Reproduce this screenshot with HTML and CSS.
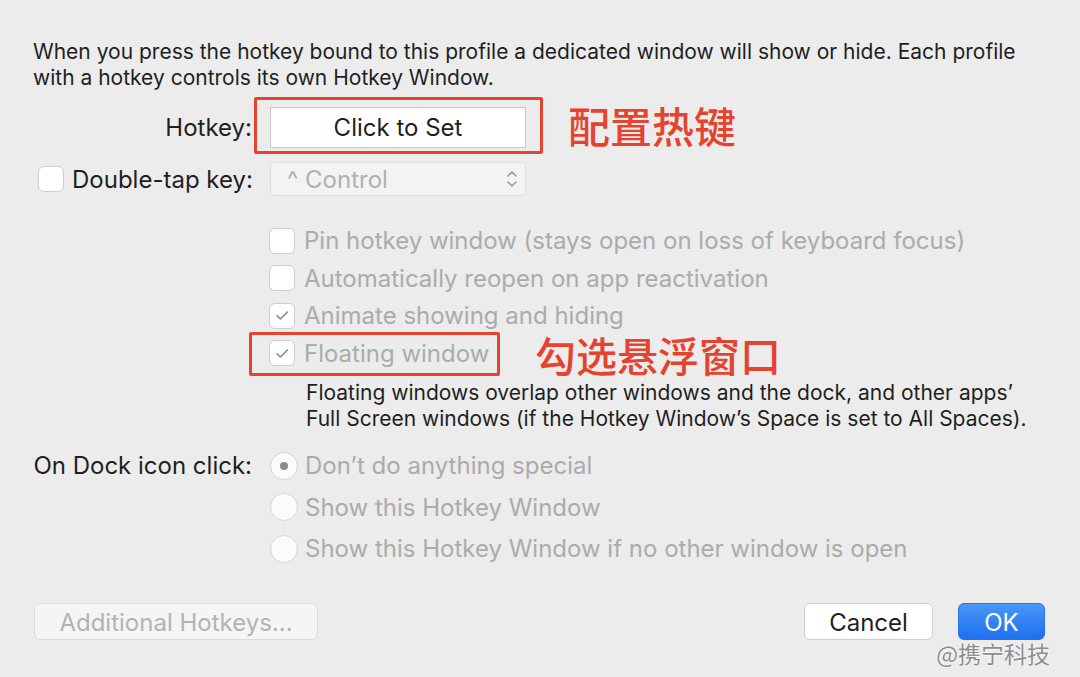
FILE: index.html
```html
<!DOCTYPE html>
<html lang="en">
<head>
    <meta charset="UTF-8">
    <title>Hotkey Window</title>
    <link rel="stylesheet" href="styles.css">
</head>
<body>
    <div class="dialog">
        <!-- Intro text -->
        <p class="intro">When you press the hotkey bound to this profile a dedicated window will show or hide. Each profile with a hotkey controls its own Hotkey Window.</p>

        <!-- Hotkey row -->
        <div class="row hotkey-row">
            <div class="label">Hotkey:</div>
            <div class="control">
                <div class="mark-wrap">
                    <div class="field">Click to Set</div>
                    <span class="mark mark-hotkey"></span>
                    <span class="note note-hotkey">配置热键</span>
                </div>
            </div>
        </div>

        <!-- Double-tap row -->
        <div class="row tap-row">
            <div class="label label-check">
                <span class="box"></span>
                <span>Double-tap key:</span>
            </div>
            <div class="control">
                <div class="select">
                    <span>^ Control</span>
                    <svg class="stepper" width="12" height="22" viewBox="0 0 12 22">
                        <path d="M2 8 L6 4 L10 8" fill="none" stroke="#9a9a9a" stroke-width="1.6" stroke-linecap="round" stroke-linejoin="round"/>
                        <path d="M2 14 L6 18 L10 14" fill="none" stroke="#9a9a9a" stroke-width="1.6" stroke-linecap="round" stroke-linejoin="round"/>
                    </svg>
                </div>
            </div>
        </div>

        <!-- Options -->
        <div class="options">
            <div class="opt"><span class="box"></span>Pin hotkey window (stays open on loss of keyboard focus)</div>
            <div class="opt"><span class="box"></span>Automatically reopen on app reactivation</div>
            <div class="opt"><span class="box checked">&#10003;</span>Animate showing and hiding</div>
            <div class="opt">
                <div class="mark-wrap">
                    <span class="box checked">&#10003;</span>Floating window
                    <span class="mark mark-float"></span>
                    <span class="note note-float">勾选悬浮窗口</span>
                </div>
            </div>
        </div>
        <p class="desc">Floating windows overlap other windows and the dock, and other apps’<br>Full Screen windows (if the Hotkey Window’s Space is set to All Spaces).</p>

        <!-- Dock icon -->
        <div class="row dock-row">
            <div class="label">On Dock icon click:</div>
            <div class="control radios">
                <div class="radio-opt"><span class="radio on"></span>Don’t do anything special</div>
                <div class="radio-opt"><span class="radio"></span>Show this Hotkey Window</div>
                <div class="radio-opt"><span class="radio"></span>Show this Hotkey Window if no other window is open</div>
            </div>
        </div>

        <!-- Buttons -->
        <div class="buttons">
            <button class="btn btn-extra">Additional Hotkeys...</button>
            <div class="right-btns">
                <button class="btn btn-cancel">Cancel</button>
                <button class="btn btn-ok">OK</button>
                <span class="watermark">@携宁科技</span>
            </div>
        </div>
    </div>
</body>
</html>
```

FILE: styles.css
```css
/* Page base */
body {
    margin: 0;
    background-color: #ececec;
    font-family: Inter, "Noto Sans", "Noto Sans CJK SC", sans-serif;
    color: #1f1f1f;
}

.dialog {
    width: 1080px;
    height: 677px;
    padding: 39px 35px 0 33px;
    box-sizing: border-box;
    overflow: hidden;
}

.intro {
    margin: 0;
    font-size: 21px;
    line-height: 26px;
}

/* Label / control rows */
.row {
    display: grid;
    grid-template-columns: 219px 1fr;
    column-gap: 18px;
    align-items: center;
}

.label {
    font-size: 24px;
    text-align: right;
    white-space: nowrap;
}

.hotkey-row {
    margin-top: 16px;
    height: 41px;
}

.field {
    width: 256px;
    height: 41px;
    box-sizing: border-box;
    background-color: #fff;
    border: 1px solid #c8c8c8;
    font-size: 24px;
    display: flex;
    align-items: center;
    justify-content: center;
}

/* Red annotations */
.mark-wrap {
    position: relative;
    display: inline-flex;
    align-items: center;
}

.mark {
    position: absolute;
    border: 3px solid #e5432e;
    border-radius: 2px;
}

.mark-hotkey {
    left: -16px;
    top: -10px;
    width: 283px;
    height: 51px;
}

.note {
    position: absolute;
    color: #e5432e;
    font-family: "Noto Sans CJK SC", sans-serif;
    font-weight: 500;
    line-height: 1;
    white-space: nowrap;
}

.note-hotkey {
    left: 298px;
    top: -3px;
    font-size: 42px;
}

.tap-row {
    margin-top: 14px;
    height: 34px;
}

.label-check {
    display: flex;
    align-items: center;
    gap: 8px;
    padding-left: 5px;
}

.select {
    width: 256px;
    height: 34px;
    box-sizing: border-box;
    background-color: #f3f3f3;
    border: 1px solid #dedede;
    border-radius: 5px;
    display: flex;
    align-items: center;
    justify-content: space-between;
    padding: 0 7px 0 16px;
    font-size: 24px;
    color: #b0b0b0;
}

/* Checkboxes */
.box {
    width: 26px;
    height: 26px;
    box-sizing: border-box;
    border: 1px solid #cdcdcd;
    border-radius: 6px;
    background-color: #fff;
    display: inline-flex;
    align-items: center;
    justify-content: center;
    flex-shrink: 0;
    font-size: 18px;
    color: #8a8a8a;
}

.options {
    margin-top: 26px;
    padding-left: 236px;
}

.opt {
    height: 37.5px;
    display: flex;
    align-items: center;
    gap: 9px;
    font-size: 24px;
    color: #ababab;
    white-space: nowrap;
}

.opt .mark-wrap {
    gap: 9px;
}

.mark-float {
    left: -20px;
    top: -7px;
    width: 245px;
    height: 38px;
}

.note-float {
    left: 266px;
    top: -5px;
    font-size: 41px;
}

.desc {
    margin: 8px 0 0 273px;
    font-size: 21px;
    line-height: 26px;
    white-space: nowrap;
}

/* Radios */
.dock-row {
    margin-top: 13px;
    align-items: start;
}

.dock-row .label {
    line-height: 41.5px;
}

.radio-opt {
    height: 41.5px;
    display: flex;
    align-items: center;
    gap: 7px;
    font-size: 24px;
    color: #ababab;
    white-space: nowrap;
}

.radio {
    width: 28px;
    height: 28px;
    box-sizing: border-box;
    border: 1px solid #d4d4d4;
    border-radius: 50%;
    background-color: #fbfbfb;
    display: inline-flex;
    align-items: center;
    justify-content: center;
    flex-shrink: 0;
}

.radio.on::after {
    content: "";
    width: 8px;
    height: 8px;
    border-radius: 50%;
    background-color: #8a8a8a;
}

/* Bottom buttons */
.buttons {
    margin-top: 33px;
    display: flex;
    justify-content: space-between;
    align-items: center;
}

.right-btns {
    position: relative;
    display: flex;
    gap: 25px;
}

.btn {
    height: 37px;
    font-family: inherit;
    font-size: 24px;
    border-radius: 6px;
    padding: 2px 0 0;
}

.btn-extra {
    width: 284px;
    background-color: #f5f5f5;
    border: 1px solid #dcdcdc;
    color: #b3b3b3;
    margin-left: 1px;
}

.btn-cancel {
    width: 129px;
    background-color: #fff;
    border: 1px solid #cfcfcf;
    color: #1f1f1f;
}

.btn-ok {
    width: 87px;
    background: linear-gradient(#4a97f8, #1e6ff0);
    border: 1px solid #2a72e6;
    color: #fff;
}

.watermark {
    position: absolute;
    right: -5px;
    top: 33px;
    font-family: "Noto Sans CJK SC", sans-serif;
    font-size: 23px;
    color: #8d8d8d;
    text-shadow: 0 0 2px #fff, 0 0 2px #fff;
}
```
